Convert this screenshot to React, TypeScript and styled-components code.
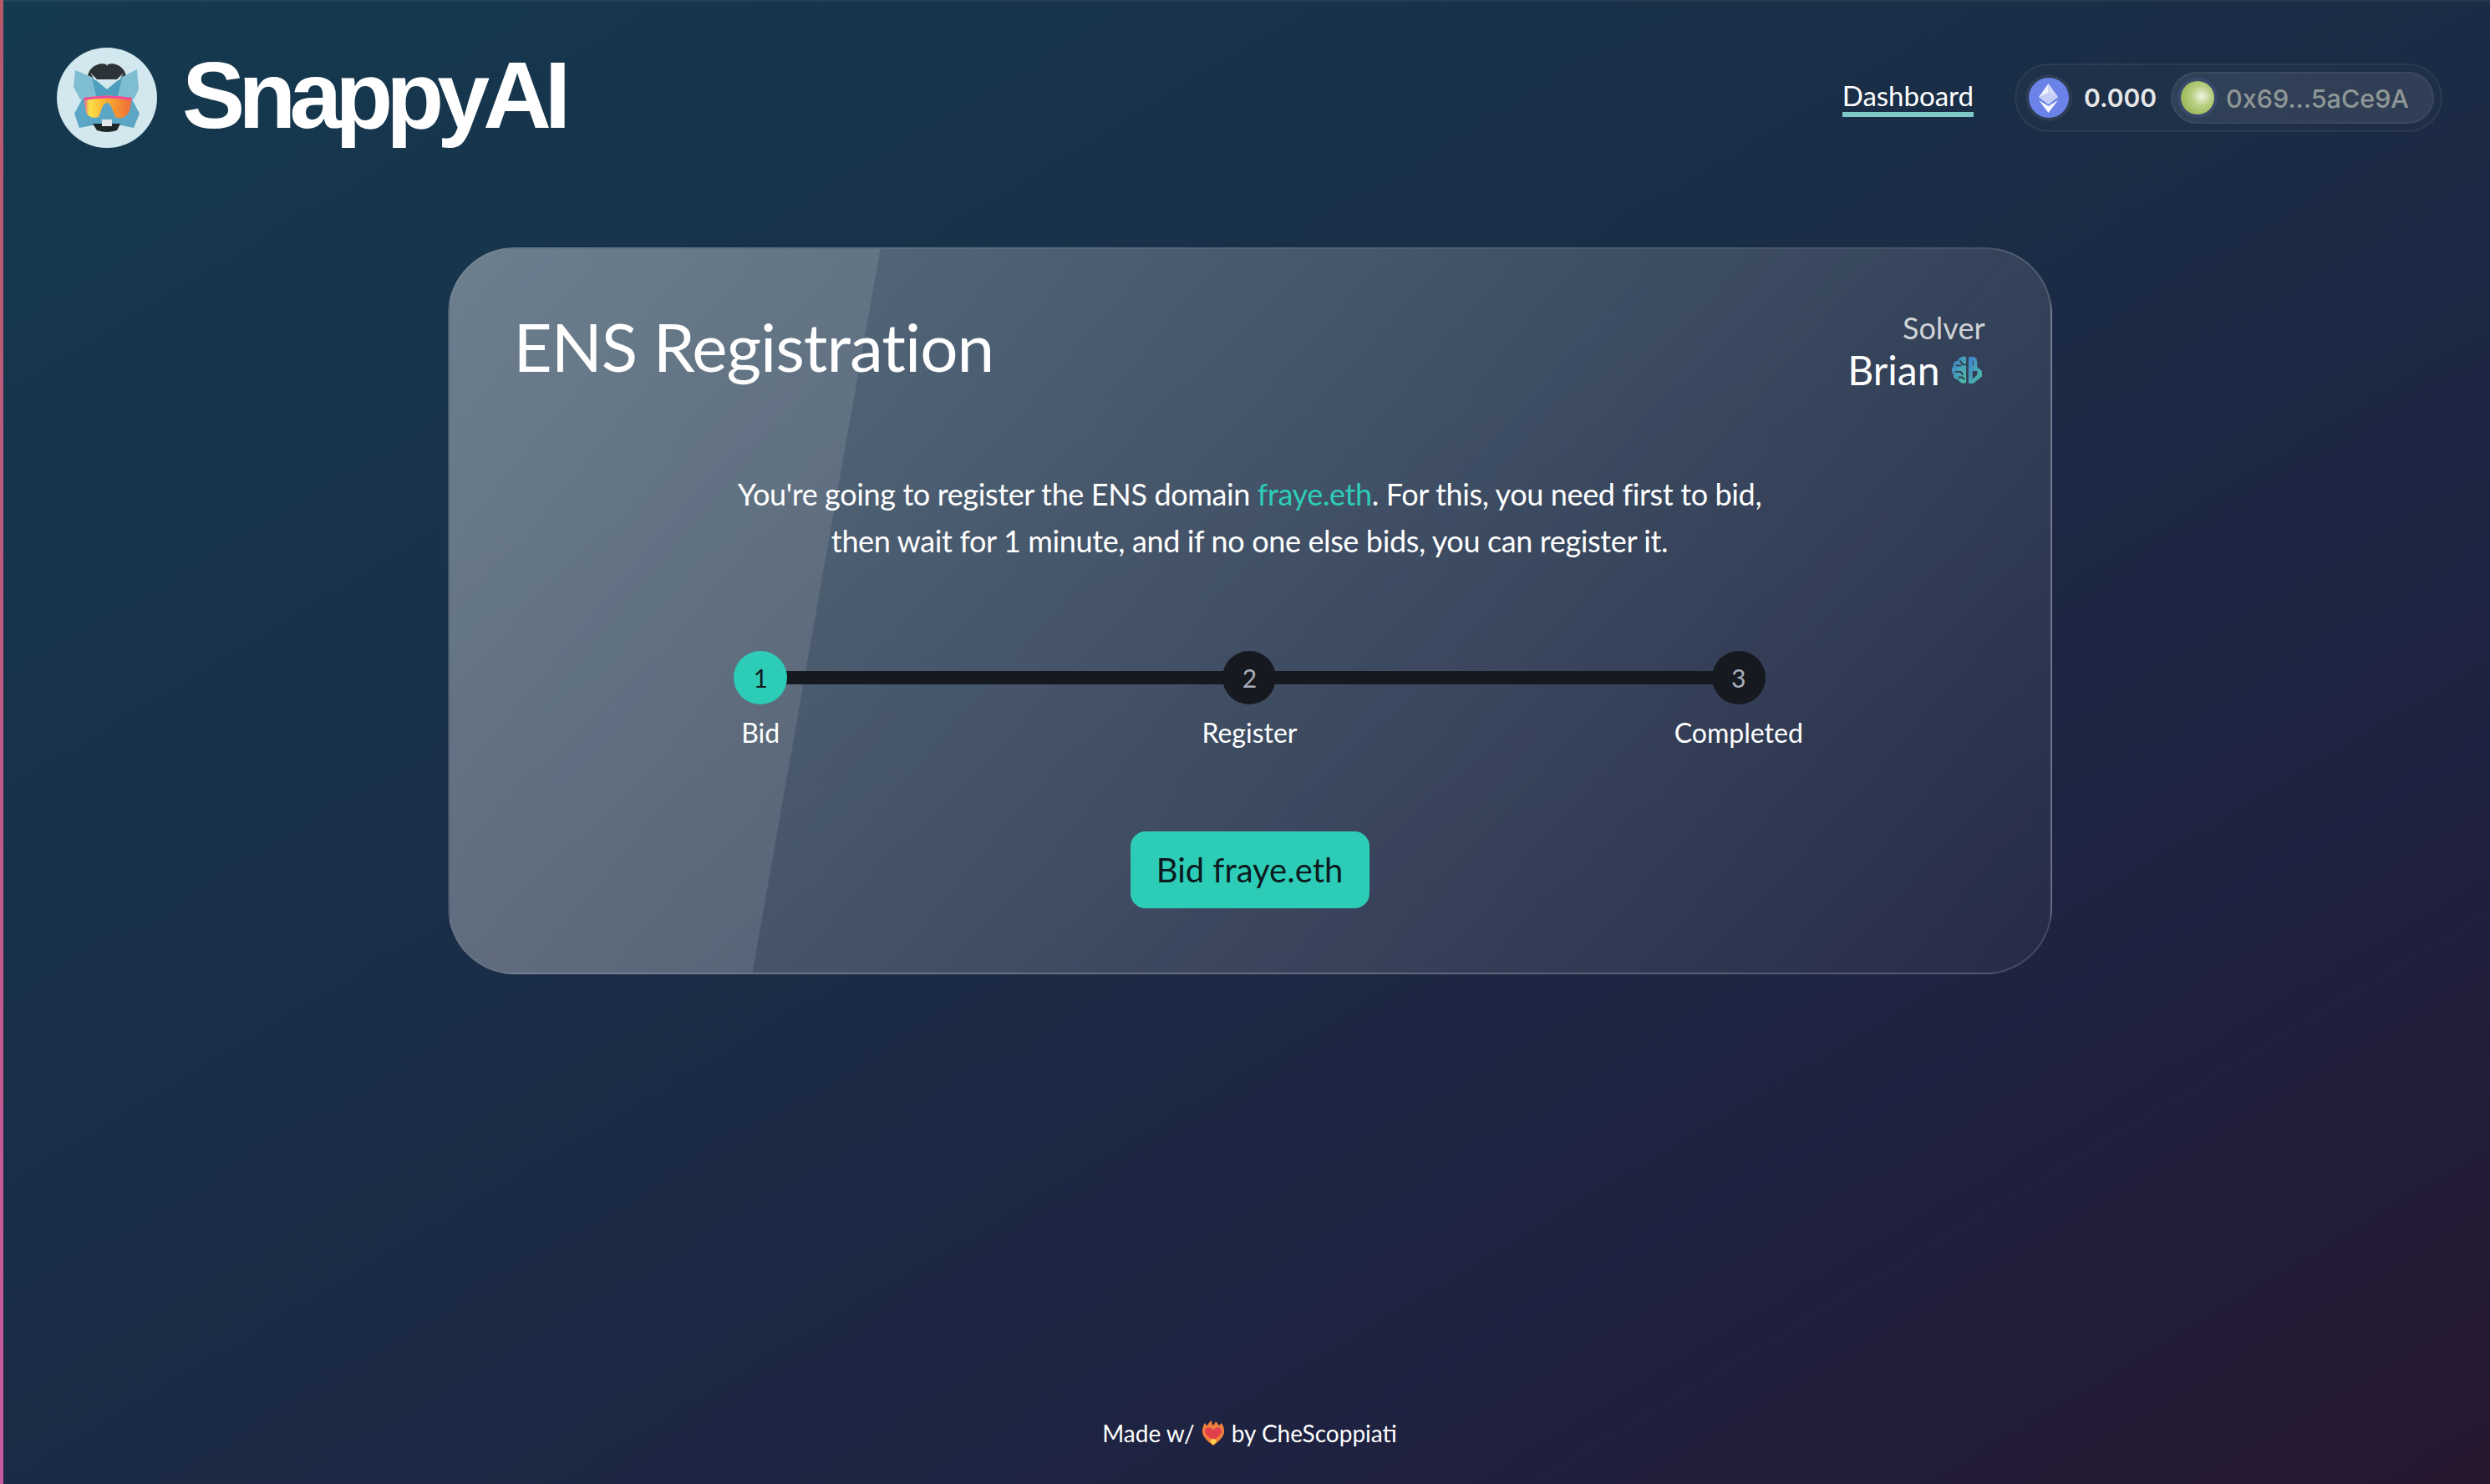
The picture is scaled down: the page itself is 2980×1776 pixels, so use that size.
import React from "react";
import styled, { createGlobalStyle } from "styled-components";

const GlobalStyle = createGlobalStyle`
  html, body {
    margin: 0;
    padding: 0;
    background: #15364d;
  }
  * {
    box-sizing: border-box;
  }
`;

const Page = styled.div`
  position: relative;
  display: flex;
  flex-direction: column;
  width: 2980px;
  height: 1776px;
  overflow: hidden;
  padding: 2px 0 0 4px;
  font-family: Lato, "Open Sans", sans-serif;
  color: #fff;
  background: linear-gradient(to bottom right, #143a50 0%, #1b2b45 50%, #1e2240 75%, #27172f 100%);

  /* the edge of the window behind */
  &::before {
    content: "";
    position: absolute;
    left: 0;
    top: 0;
    bottom: 0;
    width: 4px;
    background: linear-gradient(180deg, #b85a6c 0%, #c85aa0 100%);
  }

  &::after {
    content: "";
    position: absolute;
    left: 4px;
    right: 0;
    top: 0;
    height: 2px;
    background: rgba(255, 255, 255, 0.06);
  }
`;

const TopBar = styled.header`
  display: flex;
  align-items: center;
  justify-content: space-between;
  height: 230px;
  padding: 0 57px 0 64px;
`;

const Brand = styled.div`
  display: flex;
  align-items: center;
  gap: 30px;
`;

const BrandName = styled.div`
  margin-top: -6px;
  font-family: "Liberation Sans", Arial, sans-serif;
  font-weight: 700;
  font-size: 113px;
  line-height: 1;
  letter-spacing: -8px;
`;

const Nav = styled.nav`
  display: flex;
  align-items: center;
  gap: 49px;
`;

const NavLink = styled.a`
  font-size: 33px;
  line-height: 40px;
  color: #fff;
  border-bottom: 6px solid #7ec8c8;
`;

const Wallet = styled.div`
  display: flex;
  align-items: center;
  height: 82px;
  padding: 0 8px 0 15px;
  border: 2px solid rgba(255, 255, 255, 0.06);
  border-radius: 41px;
  background: rgba(255, 255, 255, 0.02);
`;

const Balance = styled.span`
  margin: 0 17px 0 18px;
  font-family: Inter, sans-serif;
  font-weight: 600;
  font-size: 30px;
  color: #e6e8e8;
`;

const IconRing = styled.span`
  display: flex;
  border-radius: 50%;
  box-shadow: 0 0 0 4px rgba(255, 255, 255, 0.06);
`;

const Account = styled.div`
  display: flex;
  align-items: center;
  gap: 14px;
  height: 62px;
  padding: 0 28px 0 10px;
  border: 2px solid rgba(255, 255, 255, 0.05);
  border-radius: 31px;
  background: rgba(255, 255, 255, 0.08);
`;

const Avatar = styled.span`
  width: 40px;
  height: 40px;
  border-radius: 50%;
  background: radial-gradient(circle at 62% 45%, #f2f5e6 0%, #b9d084 35%, #8aa83c 100%);
  box-shadow: 0 0 0 4px rgba(90, 110, 200, 0.2);
`;

const Address = styled.span`
  font-family: Inter, sans-serif;
  font-weight: 500;
  font-size: 30.5px;
  color: #8f9796;
`;

const Main = styled.main`
  display: flex;
  flex: 1;
  flex-direction: column;
  align-items: center;
  padding: 64px 0 0 7px;
`;

const Card = styled.section`
  position: relative;
  width: 1920px;
  height: 870px;
  padding: 68px 80px 0;
  overflow: hidden;
  border: 2px solid rgba(255, 255, 255, 0.14);
  border-radius: 80px;
  background: linear-gradient(130deg, rgba(255, 255, 255, 0.3) 0%, rgba(255, 255, 255, 0.04) 100%);

  /* the diagonal glass reflection */
  &::before {
    content: "";
    position: absolute;
    inset: 0;
    background: rgba(255, 255, 255, 0.1);
    clip-path: polygon(0 0, 516px 0, 363px 100%, 0 100%);
    pointer-events: none;
  }
`;

const CardHead = styled.div`
  position: relative;
  display: flex;
  align-items: flex-start;
  justify-content: space-between;
`;

const Title = styled.h1`
  margin: 0 0 0 -3px;
  font-weight: 400;
  font-size: 80px;
  line-height: 96px;
  letter-spacing: -1px;
`;

const Solver = styled.div`
  display: flex;
  flex-direction: column;
  align-items: flex-end;
  margin: 4px -2px 0 0;
`;

const SolverLabel = styled.span`
  font-size: 36px;
  line-height: 44px;
  color: #d0d2d8;
`;

const SolverName = styled.span`
  display: flex;
  align-items: center;
  gap: 13px;
  padding-right: 3px;
  font-size: 48px;
  line-height: 58px;
`;

const Intro = styled.p`
  position: relative;
  margin: 91px 0 0;
  font-size: 36px;
  line-height: 56px;
  letter-spacing: -0.37px;
  text-align: center;
`;

const Domain = styled.span`
  color: #2dccb6;
`;

const Steps = styled.ol`
  position: relative;
  display: grid;
  grid-template-columns: repeat(3, 1fr);
  margin: 104px 0 0;
  padding: 0;
  list-style: none;
`;

const Step = styled.li`
  position: relative;
  display: flex;
  flex-direction: column;
  align-items: center;
  gap: 14px;

  &:not(:last-child)::after {
    content: "";
    position: absolute;
    left: 50%;
    top: 24px;
    width: 100%;
    height: 16px;
    background: #16191f;
  }
`;

const StepDot = styled.span<{ $active?: boolean }>`
  position: relative;
  z-index: 1;
  display: flex;
  align-items: center;
  justify-content: center;
  width: 64px;
  height: 64px;
  border-radius: 50%;
  font-size: 30px;
  color: ${(p) => (p.$active ? "#0d1a1e" : "#aab0bc")};
  background: ${(p) => (p.$active ? "#2dccb6" : "#16191f")};
`;

const StepLabel = styled.span`
  font-size: 32px;
  line-height: 40px;
`;

const Actions = styled.div`
  position: relative;
  display: flex;
  justify-content: center;
  margin-top: 98px;
`;

const BidButton = styled.button`
  width: 286px;
  height: 92px;
  border: 0;
  border-radius: 18px;
  font-family: inherit;
  font-size: 40px;
  color: #0b1a1f;
  background: #2dccb6;
`;

const Footer = styled.footer`
  display: flex;
  align-items: center;
  justify-content: center;
  gap: 8px;
  height: 122px;
  padding-left: 7px;
  font-size: 28px;
`;

const FoxLogo = () => (
  <svg width="120" height="120" viewBox="0 0 120 120">
    <defs>
      <linearGradient id="lens" x1="0" x2="1" y1="0" y2="0">
        <stop offset="0" stopColor="#d85a9a" />
        <stop offset="0.12" stopColor="#f9e24a" />
        <stop offset="0.45" stopColor="#fbb02c" />
        <stop offset="1" stopColor="#ee6a3a" />
      </linearGradient>
    </defs>
    <circle cx="60" cy="60" r="60" fill="#d3e8ee" />
    <path d="M37 38 C36 24 50 17 59 20 L60 22 L61 20 C70 17 84 24 83 38 Z" fill="#2b3336" />
    <path d="M22 27 L44 36 L60 50 L76 36 L96 26 L98 50 L92 62 H28 L20 47 Z" fill="#7fbdd2" />
    <path d="M42 36 L60 50 L78 36 L72 62 H48 Z" fill="#4d9dbf" />
    <path d="M40 30 L50 40 L45 38 Z M80 30 L70 40 L75 38 Z" fill="#f2f7f9" />
    <path d="M30 62 H90 L99 79 L92 96 L72 92 H48 L27 96 L21 79 Z" fill="#5ba6c5" />
    <path d="M43 91 H76 L72 99 Q60 103 48 99 Z" fill="#1f2628" />
    <rect x="54" y="86" width="12" height="8" fill="#e4e7ea" />
    <path d="M32 60 Q60 55 90 60 L87 76 Q80 88 70 83 L65 70 Q60 62 55 70 L50 83 Q40 86 35 78 Z" fill="url(#lens)" />
    <path d="M32 60 Q60 55 90 60 L89.500 63 Q60 58 32.500 63 Z" fill="#ec4c9a" />
  </svg>
);

const EthIcon = () => (
  <svg width="48" height="48" viewBox="0 0 48 48">
    <circle cx="24" cy="24" r="24" fill="#6b82e8" />
    <path d="M23.5 7 L12 23 L23.5 32 Z" fill="#fff" opacity="0.9" />
    <path d="M23.5 7 L35 23 L23.5 32 Z" fill="#fff" opacity="0.7" />
    <path d="M12 23 L23.5 18 L35 23 L23.5 32 Z" fill="#c4cef6" />
    <path d="M12 27 L23.5 34 L35 27 L23.5 42 Z" fill="#fff" opacity="0.95" />
  </svg>
);

const BrainIcon = () => (
  <svg width="38" height="34" viewBox="0 0 40 36">
    <defs>
      <linearGradient id="brain" x1="0" x2="1" y1="0" y2="1">
        <stop offset="0" stopColor="#3f7fd0" />
        <stop offset="1" stopColor="#4fc0a0" />
      </linearGradient>
    </defs>
    <path d="M19 1 C12 0 9 3 9 6 C4 6 2 10 3 13 C0 15 0 21 3 23 C2 27 5 30 9 30 C10 34 15 36 19 34 Z" fill="url(#brain)" />
    <path d="M22 1 H28 C32 1 33 5 33 9 V14 L39 19 V26 L28 35 H22 Z" fill="url(#brain)" />
    <path d="M27 19 H33 V24 L27 29 Z" fill="#333c54" />
    <path d="M27 6 H28 V12 H27 Z" fill="#333c54" />
    <path d="M6 12 H13 M5 20 H12 L15 24 M11 6 L15 11 H19 M9 27 L14 27 L17 30" stroke="#333c54" strokeWidth="2" fill="none" />
  </svg>
);

const FireHeart = () => (
  <svg width="28" height="30" viewBox="0 0 28 30">
    <path d="M14 30 C6 24 1 19 1 13 C1 9 2 6 4 3 C5 5 6 6 7 6 C8 4 9 2 12 0 C12 3 13 5 14 6 C15 5 16 3 17 1 C19 3 20 5 21 6 C22 5 23 4 24 3 C26 6 27 9 27 13 C27 19 22 24 14 30 Z" fill="#f0803c" />
    <path d="M14 24 C9 20 4 17 4 13 C4 9 8 7 11 9 C12 10 13 10 14 11 C15 10 16 10 17 9 C20 7 24 9 24 13 C24 17 19 20 14 24 Z" fill="#e0404a" />
    <path d="M14 29 C11 27 10 25 11 22 C12 23 13 23 14 21 C15 23 16 23 17 22 C18 25 17 27 14 29 Z" fill="#fbd34a" />
  </svg>
);

const steps = ["Bid", "Register", "Completed"];

export default function App() {
  return (
    <Page>
      <GlobalStyle />
      <TopBar>
        <Brand>
          <FoxLogo />
          <BrandName>SnappyAI</BrandName>
        </Brand>
        <Nav>
          <NavLink>Dashboard</NavLink>
          <Wallet>
            <IconRing>
              <EthIcon />
            </IconRing>
            <Balance>0.000</Balance>
            <Account>
              <Avatar />
              <Address>0x69...5aCe9A</Address>
            </Account>
          </Wallet>
        </Nav>
      </TopBar>
      <Main>
        <Card>
          <CardHead>
            <Title>ENS Registration</Title>
            <Solver>
              <SolverLabel>Solver</SolverLabel>
              <SolverName>
                Brian <BrainIcon />
              </SolverName>
            </Solver>
          </CardHead>
          <Intro>
            You're going to register the ENS domain <Domain>fraye.eth</Domain>. For this, you need first to bid,
            <br />
            then wait for 1 minute, and if no one else bids, you can register it.
          </Intro>
          <Steps>
            {steps.map((label, i) => (
              <Step key={label}>
                <StepDot $active={i === 0}>{i + 1}</StepDot>
                <StepLabel>{label}</StepLabel>
              </Step>
            ))}
          </Steps>
          <Actions>
            <BidButton>Bid fraye.eth</BidButton>
          </Actions>
        </Card>
      </Main>
      <Footer>
        Made w/ <FireHeart /> by CheScoppiati
      </Footer>
    </Page>
  );
}
